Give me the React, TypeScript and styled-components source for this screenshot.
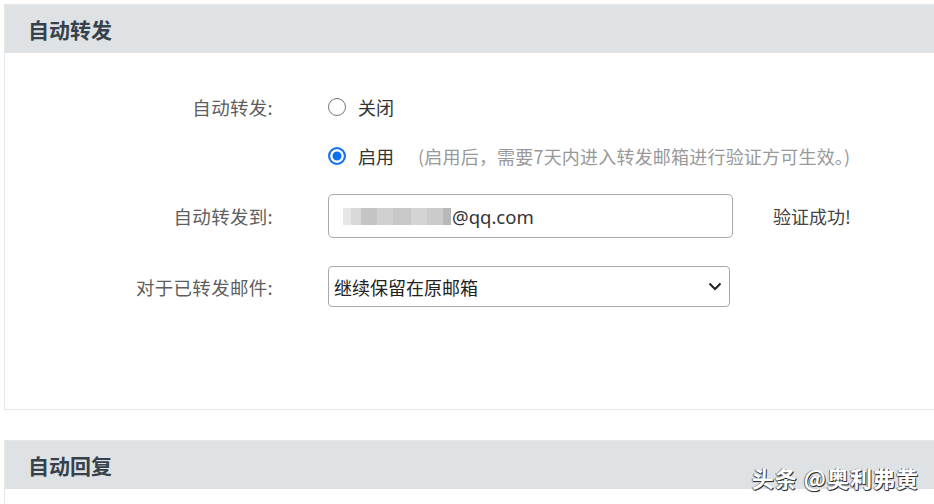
import React from "react";
import styled, { createGlobalStyle } from "styled-components";

const GlobalStyle = createGlobalStyle`
  html, body {
    margin: 0;
    padding: 0;
    background: #fff;
    font-family: "Noto Sans", "Noto Sans CJK SC", sans-serif;
  }
`;

const Page = styled.div`
  position: relative;
  width: 934px;
  height: 504px;
  overflow: hidden;
  padding: 4px 0 0 4px;
  box-sizing: border-box;
`;

const Panel = styled.section<{ $top?: number }>`
  margin-top: ${p => p.$top || 0}px;
  margin-right: -20px;
  border: 1px solid #e4e6e8;
  background: #fff;
`;

const PanelHeader = styled.div`
  height: 48px;
  display: flex;
  align-items: center;
  padding-left: 23px;
  background: #dee2e5;
  font-family: "Noto Sans CJK SC", sans-serif;
  font-size: 21px;
  font-weight: 700;
  color: #36414c;
`;

const PanelBody = styled.div<{ $h: number }>`
  height: ${p => p.$h}px;
  box-sizing: border-box;
  padding-top: 34px;
  display: flex;
  flex-direction: column;
`;

const Row = styled.div<{ $top?: number; $h: number }>`
  display: flex;
  align-items: center;
  margin-top: ${p => p.$top || 0}px;
  height: ${p => p.$h}px;
`;

const Label = styled.div`
  width: 268px;
  margin-right: 55px;
  text-align: right;
  font-family: "Noto Sans CJK SC", sans-serif;
  font-size: 18.5px;
  letter-spacing: 0.3px;
  color: #5e5e5e;
  white-space: nowrap;
`;

const RadioLabel = styled.label`
  display: flex;
  align-items: center;
  gap: 12px;
  font-family: "Noto Sans CJK SC", sans-serif;
  font-size: 18px;
  color: #333;
  white-space: nowrap;
`;

const Radio = styled.input`
  appearance: none;
  margin: 0;
  width: 18px;
  height: 18px;
  border-radius: 50%;
  border: 1px solid #767676;
  background: #fff;
  box-sizing: border-box;

  &:checked {
    border: 2px solid #1a73e8;
    background: #0b6ff0;
    box-shadow: inset 0 0 0 2.5px #fff;
  }
`;

const Hint = styled.span`
  margin-left: 24px;
  color: #999;
  letter-spacing: 0.2px;
`;

const Field = styled.div`
  width: 405px;
  height: 44px;
  box-sizing: border-box;
  border: 1px solid #a8a8a8;
  border-radius: 5px;
  display: flex;
  align-items: center;
  padding-left: 14px;
  font-size: 18.5px;
  color: #333;
`;

const Mask = styled.span`
  display: flex;
  height: 17px;
  margin-right: 1px;
`;

const MaskCell = styled.span<{ $w: number; $c: string }>`
  width: ${p => p.$w}px;
  height: 100%;
  background: ${p => p.$c};
`;

const Status = styled.span`
  margin-left: 40px;
  font-family: "Noto Sans CJK SC", sans-serif;
  font-size: 18px;
  color: #444;
`;

const SelectWrap = styled.div`
  position: relative;
  width: 402px;
  height: 41px;
`;

const Select = styled.select`
  appearance: none;
  width: 100%;
  height: 100%;
  box-sizing: border-box;
  border: 1px solid #a8a8a8;
  border-radius: 4px;
  background: #fff;
  padding-left: 5px;
  font-family: "Noto Sans CJK SC", sans-serif;
  font-size: 18px;
  color: #222;
`;

const Chevron = styled.svg`
  position: absolute;
  right: 8px;
  top: 15px;
  pointer-events: none;
`;

const Watermark = styled.div`
  position: absolute;
  right: 15px;
  bottom: 11px;
  font-family: "Noto Sans CJK SC", sans-serif;
  font-size: 22px;
  font-weight: 700;
  color: #fff;
  text-shadow: 1px 1px 0 #333, -1px 0 0 #777, 0 1px 1px #222;
  letter-spacing: 1px;
  white-space: pre;
`;

const maskCells = [
  { w: 8, c: "#e6e6e6" },
  { w: 10, c: "#d9d9d9" },
  { w: 16, c: "#c4c4c4" },
  { w: 16, c: "#d0d0d0" },
  { w: 18, c: "#c8c8c8" },
  { w: 16, c: "#d4d4d4" },
  { w: 16, c: "#cbcbcb" },
  { w: 8, c: "#b8b8b8" },
];

export default function App() {
  return (
    <>
      <GlobalStyle />
      <Page>
        <Panel>
          <PanelHeader>自动转发</PanelHeader>
          <PanelBody $h={356}>
            <Row $h={40}>
              <Label>自动转发:</Label>
              <RadioLabel>
                <Radio type="radio" name="fwd" />
                关闭
              </RadioLabel>
            </Row>
            <Row $h={40} $top={9}>
              <Label />
              <RadioLabel>
                <Radio type="radio" name="fwd" defaultChecked />
                <span>
                  启用
                  <Hint>(启用后，需要7天内进入转发邮箱进行验证方可生效。)</Hint>
                </span>
              </RadioLabel>
            </Row>
            <Row $h={44} $top={18}>
              <Label>自动转发到:</Label>
              <Field>
                <Mask>
                  {maskCells.map((m, i) => (
                    <MaskCell key={i} $w={m.w} $c={m.c} />
                  ))}
                </Mask>
                @qq.com
              </Field>
              <Status>验证成功!</Status>
            </Row>
            <Row $h={41} $top={28}>
              <Label>对于已转发邮件:</Label>
              <SelectWrap>
                <Select defaultValue="keep">
                  <option value="keep">继续保留在原邮箱</option>
                  <option value="delete">从原邮箱删除</option>
                </Select>
                <Chevron width="14" height="10" viewBox="0 0 14 10">
                  <path d="M1.5 2.5 L7 8 L12.5 2.5" fill="none" stroke="#222" strokeWidth="2" />
                </Chevron>
              </SelectWrap>
            </Row>
          </PanelBody>
        </Panel>
        <Panel $top={30}>
          <PanelHeader>自动回复</PanelHeader>
          <PanelBody $h={60} />
        </Panel>
        <Watermark>头条 @奥利弗黄</Watermark>
      </Page>
    </>
  );
}
